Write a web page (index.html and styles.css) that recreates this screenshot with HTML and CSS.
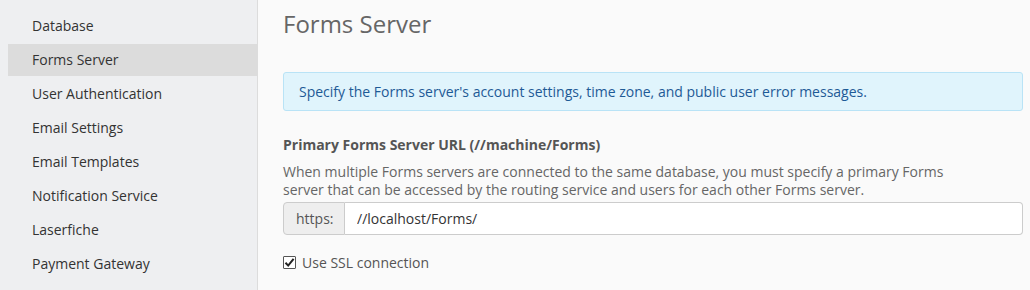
FILE: index.html
```html
<!DOCTYPE html>
<html lang="en">
<head>
  <meta charset="UTF-8"/>
  <title>Forms Server</title>
  <link rel="stylesheet" href="styles.css">
</head>
<body>
  <div class="layout">
    <nav class="sidebar">
      <a class="nav-item">Database</a>
      <a class="nav-item active">Forms Server</a>
      <a class="nav-item">User Authentication</a>
      <a class="nav-item">Email Settings</a>
      <a class="nav-item">Email Templates</a>
      <a class="nav-item">Notification Service</a>
      <a class="nav-item">Laserfiche</a>
      <a class="nav-item">Payment Gateway</a>
    </nav>

    <main class="content">
      <h1 class="page-title">Forms Server</h1>

      <div class="alert">Specify the Forms server's account settings, time zone, and public user error messages.</div>

      <div class="field">
        <label class="field-label" for="serverUrl">Primary Forms Server URL (//machine/Forms)</label>
        <p class="help">When multiple Forms servers are connected to the same database, you must specify a primary Forms server that can be accessed by the routing service and users for each other Forms server.</p>
        <div class="input-group">
          <span class="addon">https:</span>
          <input id="serverUrl" type="text" value="//localhost/Forms/"/>
        </div>
      </div>

      <label class="check">
        <span class="box">
          <svg width="11" height="11" viewBox="0 0 11 11"><path d="M1.5 5.8 L4.2 8.6 L9.6 1.8" fill="none" stroke="#222" stroke-width="2"/></svg>
        </span>
        <span>Use SSL connection</span>
      </label>
    </main>
  </div>
</body>
</html>
```

FILE: styles.css
```css
* {
  box-sizing: border-box;
}

body {
  margin: 0;
  background: #fafafa;
  font-family: 'Open Sans', sans-serif;
  font-size: 14px;
  color: #333;
}

.layout {
  display: flex;
  height: 290px;
  overflow: hidden;
}

.sidebar {
  width: 258px;
  flex-shrink: 0;
  background: #eeeff1;
  border-right: 1px solid #dcdcdc;
  padding: 10px 0 0 8px;
  display: flex;
  flex-direction: column;
  gap: 2px;
}

.nav-item {
  display: flex;
  align-items: center;
  height: 32px;
  padding: 0 0 2px 24px;
  color: #333;
  text-decoration: none;
  cursor: pointer;
}

.nav-item.active {
  background: #dcdcdc;
}

.content {
  flex: 1;
  padding: 0 7px 0 25px;
}

.page-title {
  margin: 8px 0 0;
  font-size: 24px;
  font-weight: 400;
  line-height: 32px;
  color: #666;
}

.alert {
  margin-top: 32px;
  padding: 9px 15px;
  background: #e0f4fc;
  border: 1px solid #b9e3f6;
  border-radius: 3px;
  color: #1e5a96;
  line-height: 19px;
}

.field {
  margin-top: 24px;
}

.field-label {
  display: block;
  font-weight: 700;
  color: #555;
  line-height: 20px;
}

.help {
  margin: 8px 0 0;
  max-width: 680px;
  color: #666;
  line-height: 18px;
}

.input-group {
  display: flex;
  height: 33px;
  margin-top: 3px;
}

.addon {
  display: flex;
  align-items: center;
  padding: 0 12px;
  width: 62px;
  background: #eee;
  color: #555;
  border: 1px solid #ccc;
  border-radius: 4px 0 0 4px;
}

.input-group input {
  flex: 1;
  border: 1px solid #ccc;
  border-left: none;
  border-radius: 0 4px 4px 0;
  padding: 0 12px;
  font-family: 'Open Sans', sans-serif;
  font-size: 14px;
  color: #333;
  background: #fff;
}

.check {
  display: flex;
  align-items: center;
  gap: 6px;
  margin-top: 18px;
  color: #555;
}

.box {
  display: flex;
  align-items: center;
  justify-content: center;
  width: 13px;
  height: 13px;
  background: #fff;
  border: 1px solid #555;
  border-radius: 1px;
}
```
